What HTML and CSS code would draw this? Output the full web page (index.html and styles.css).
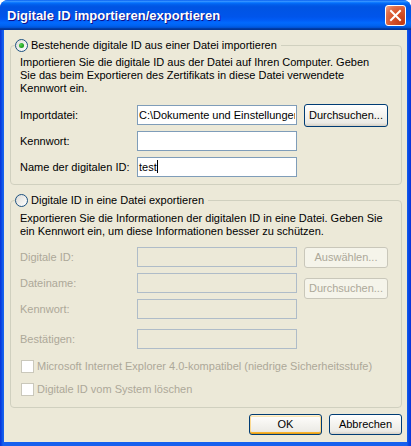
FILE: index.html
```html
<!DOCTYPE html>
<html lang="de">
<head>
<meta charset="utf-8">
<title>Digitale ID importieren/exportieren</title>
<link rel="stylesheet" href="styles.css">
</head>
<body>
<div class="window">
  <div class="titlebar">
    <span class="title">Digitale ID importieren/exportieren</span>
    <button class="close" aria-label="Schließen">
      <svg width="13" height="13" viewBox="0 0 13 13"><path d="M2 2 L11 11 M11 2 L2 11" stroke="#fff" stroke-width="2" stroke-linecap="square"/></svg>
    </button>
  </div>
  <div class="client">
    <fieldset class="group g1">
      <legend><span class="radio checked"></span>Bestehende digitale ID aus einer Datei importieren</legend>
      <p class="desc">Importieren Sie die digitale ID aus der Datei auf Ihren Computer. Geben<br>Sie das beim Exportieren des Zertifikats in diese Datei verwendete<br>Kennwort ein.</p>
      <div class="form">
        <label>Importdatei:</label>
        <div class="input"><span class="clip">C:\Dokumente und Einstellungen</span></div>
        <button class="btn">Durchsuchen...</button>
        <label>Kennwort:</label>
        <div class="input"></div>
        <span></span>
        <label>Name der digitalen ID:</label>
        <div class="input">test<span class="caret"></span></div>
        <span></span>
      </div>
    </fieldset>

    <fieldset class="group g2">
      <legend><span class="radio"></span>Digitale ID in eine Datei exportieren</legend>
      <p class="desc">Exportieren Sie die Informationen der digitalen ID in eine Datei. Geben Sie<br>ein Kennwort ein, um diese Informationen besser zu schützen.</p>
      <div class="form f2">
        <label class="dis">Digitale ID:</label>
        <div class="input disabled"></div>
        <button class="btn disabled small">Auswählen...</button>
        <label class="dis">Dateiname:</label>
        <div class="input disabled"></div>
        <button class="btn disabled small low">Durchsuchen...</button>
        <label class="dis">Kennwort:</label>
        <div class="input disabled"></div>
        <span></span>
        <label class="dis r4">Bestätigen:</label>
        <div class="input disabled r4"></div>
        <span></span>
      </div>
      <div class="check dis"><span class="box"></span>Microsoft Internet Explorer 4.0-kompatibel (niedrige Sicherheitsstufe)</div>
      <div class="check dis"><span class="box"></span>Digitale ID vom System löschen</div>
    </fieldset>

    <div class="actions">
      <button class="btn default">OK</button>
      <button class="btn">Abbrechen</button>
    </div>
  </div>
</div>
</body>
</html>
```

FILE: styles.css
```css
* { box-sizing: border-box; }

body {
  margin: 0;
  width: 411px;
  height: 446px;
  overflow: hidden;
  background: #ffffff;
  font: 11px/13px "Liberation Sans", Arial, sans-serif;
  color: #000;
}

.window {
  width: 411px;
  height: 446px;
  display: flex;
  flex-direction: column;
  border-radius: 8px 8px 0 0;
  overflow: hidden;
  background: linear-gradient(to right, #0831D9 0, #0A4FE6 2px, #1660EE 3px, #1660EE 407px, #0A4FE6 408px, #0831D9 411px);
}

.titlebar {
  height: 30px;
  flex: none;
  display: flex;
  align-items: center;
  padding: 0 5px 0 7px;
  background: linear-gradient(to bottom,
    #0058EE 0%, #3A93FF 4%, #288EFF 6%, #127DFF 8%, #036FFC 10%,
    #0262EE 14%, #0057E5 20%, #0054E3 24%, #0055EB 56%, #005BF5 66%,
    #026AFE 76%, #0062EF 86%, #0052D6 92%, #0040AB 94%, #003092 100%);
}

.title {
  flex: 1;
  color: #ffffff;
  font: bold 13px/16px "Liberation Sans", Arial, sans-serif;
  text-shadow: 1px 1px #0F1089;
  padding-top: 1px;
}

.close {
  width: 21px;
  height: 21px;
  padding: 0;
  border: 1px solid #ffffff;
  border-radius: 3px;
  display: flex;
  align-items: center;
  justify-content: center;
  background: radial-gradient(circle at 85% 85%, #C33A14 0%, #D9552D 50%, #E0714D 75%, #F2A88E 100%);
}

.client {
  flex: 1;
  margin: 0 4px 4px;
  background: #ECE9D8;
  padding: 9px 5px 6px 6px;
  display: flex;
  flex-direction: column;
}

.group {
  margin: 0;
  border: 1px solid #D0D0BF;
  border-radius: 4px;
  padding: 4px 0 4px 4px;
  min-width: 0;
}

.g2 {
  margin-top: 9px;
  padding: 5px 0 6px 4px;
}

legend {
  display: flex;
  align-items: center;
  gap: 3px;
  height: 13px;
  line-height: 13px;
  padding: 0 4px 0 0;
}

.radio {
  width: 13px;
  height: 13px;
  border: 1px solid #1C5180;
  border-radius: 50%;
  background: linear-gradient(135deg, #DCDCD7, #ffffff);
  display: flex;
  align-items: center;
  justify-content: center;
  flex: none;
}

.radio.checked::after {
  content: "";
  width: 5px;
  height: 5px;
  border-radius: 50%;
  background: radial-gradient(circle at 35% 35%, #55D451, #21A121 60%, #1C9D1C);
}

.desc {
  margin: 0 0 7px 5px;
}

.g2 .desc { margin-bottom: 6px; }

.form {
  margin-left: 5px;
  display: grid;
  grid-template-columns: 110px 160px 84px;
  column-gap: 7px;
  grid-auto-rows: 26px;
  align-items: center;
}

.f2 {
  grid-template-rows: 26px 26px 26px 30px;
}

.r4 { margin-top: 4px; }

.input {
  height: 20px;
  border: 1px solid #7F9DB9;
  background: #ffffff;
  padding: 0 1px;
  line-height: 18px;
  white-space: nowrap;
  overflow: hidden;
}

.clip {
  display: block;
  overflow: hidden;
  white-space: nowrap;
}

.input.disabled {
  border-color: #AFBCC8;
  background: #ECE9D8;
}

.caret {
  display: inline-block;
  width: 1px;
  height: 13px;
  background: #000;
  vertical-align: -2px;
}

.btn {
  height: 23px;
  padding: 0;
  border: 1px solid #003C74;
  border-radius: 3px;
  background: linear-gradient(to bottom, #ffffff 0%, #F6F5F1 40%, #ECEBE6 85%, #D6D0C5 100%);
  font: 11px/13px "Liberation Sans", Arial, sans-serif;
  color: #000;
  white-space: nowrap;
}

.btn.small { height: 21px; }
.btn.low { margin-top: 10px; }

.btn.disabled {
  border-color: #C9C7BA;
  background: #F5F4EA;
  color: #ACA899;
}

.dis { color: #ACA899; }

.check {
  height: 23px;
  margin-left: 6px;
  display: flex;
  align-items: center;
  gap: 3px;
}

.g2 .form + .check { margin-top: 3px; }

.box {
  width: 13px;
  height: 13px;
  border: 1px solid #CAC8BB;
  background: #ffffff;
  flex: none;
}

.actions {
  margin-top: 6px;
  display: flex;
  justify-content: flex-end;
  gap: 7px;
  padding-right: 0;
}

.actions .btn {
  width: 73px;
  height: 21px;
}

.btn.default {
  box-shadow: inset 0 1px 0 #FFF0CF, inset 0 -1px 0 #E5A01A, inset 1px 0 0 #FBD88E, inset -1px 0 0 #FBD88E, inset 0 2px 0 #F9E5B5, inset 0 -2px 0 #F8B330;
}
```
